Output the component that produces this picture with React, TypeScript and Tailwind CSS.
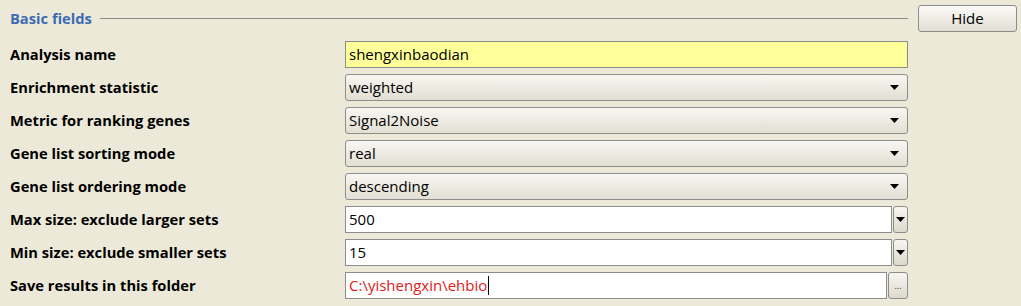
const font = { fontFamily: '"Open Sans", "Liberation Sans", sans-serif' };

function Arrow() {
  return (
    <svg width="9" height="5" viewBox="0 0 9 5">
      <path d="M0 0h9L4.5 5z" fill="#000" />
    </svg>
  );
}

function Combo({ value }: { value: string }) {
  return (
    <div className="flex h-[27px] w-[563px] items-center justify-between rounded-[3px] border border-[#8d8d8d] bg-gradient-to-b from-[#f7f6f1] to-[#e2dfd3] pl-[3px] pr-[8px] text-[15px] text-black">
      <span>{value}</span>
      <Arrow />
    </div>
  );
}

function Spinner({ value }: { value: string }) {
  return (
    <div className="flex h-[27px] w-[563px]">
      <div className="flex flex-1 items-center border border-[#8d8d8d] bg-white pl-[3px] text-[15px] text-black">
        {value}
      </div>
      <div className="ml-[1px] flex w-[15px] items-center justify-center rounded-[3px] border border-[#8d8d8d] bg-gradient-to-b from-[#f7f6f1] to-[#dcd9cc]">
        <Arrow />
      </div>
    </div>
  );
}

const rows: { label: string; kind: string; value: string }[] = [
  { label: "Analysis name", kind: "text", value: "shengxinbaodian" },
  { label: "Enrichment statistic", kind: "combo", value: "weighted" },
  { label: "Metric for ranking genes", kind: "combo", value: "Signal2Noise" },
  { label: "Gene list sorting mode", kind: "combo", value: "real" },
  { label: "Gene list ordering mode", kind: "combo", value: "descending" },
  { label: "Max size: exclude larger sets", kind: "spin", value: "500" },
  { label: "Min size: exclude smaller sets", kind: "spin", value: "15" },
  { label: "Save results in this folder", kind: "folder", value: "C:\\yishengxin\\ehbio" },
];

export default function App() {
  return (
    <div className="h-[306px] w-[1021px] bg-[#ece9d8]" style={font}>
      <div className="flex h-[36px] items-center pl-[10px]">
        <span className="text-[14.7px] font-bold text-[#3a6cb4]">Basic fields</span>
        <div className="ml-[8px] h-px flex-1 bg-[#8c8c8c]" />
        <button className="ml-[10px] mr-[4px] h-[27px] w-[99px] rounded-[3px] border border-[#8d8d8d] bg-gradient-to-b from-[#fbfaf6] to-[#e2dfd3] text-[15px] text-black">
          Hide
        </button>
      </div>
      <div className="flex flex-col gap-[6px] pt-[5px]">
        {rows.map((r) => (
          <div key={r.label} className="flex items-center">
            <div className="w-[345px] pl-[10px] text-[14.7px] font-bold text-black">{r.label}</div>
            {r.kind === "text" && (
              <div className="flex h-[27px] w-[563px] items-center border border-[#8d8d8d] bg-[#ffff99] pl-[3px] text-[15px] text-black">
                {r.value}
              </div>
            )}
            {r.kind === "combo" && <Combo value={r.value} />}
            {r.kind === "spin" && <Spinner value={r.value} />}
            {r.kind === "folder" && (
              <div className="flex h-[27px] w-[563px]">
                <div className="flex flex-1 items-center border border-[#8d8d8d] bg-white pl-[3px] text-[15px] text-[#e0201b]">
                  {r.value}
                  <span className="ml-px h-[19px] w-px bg-black" />
                </div>
                <div className="ml-[1px] flex w-[20px] items-center justify-center rounded-[3px] border border-[#8d8d8d] bg-gradient-to-b from-[#f7f6f1] to-[#dcd9cc] text-[9px] leading-none text-[#333]">
                  ...
                </div>
              </div>
            )}
          </div>
        ))}
      </div>
    </div>
  );
}
